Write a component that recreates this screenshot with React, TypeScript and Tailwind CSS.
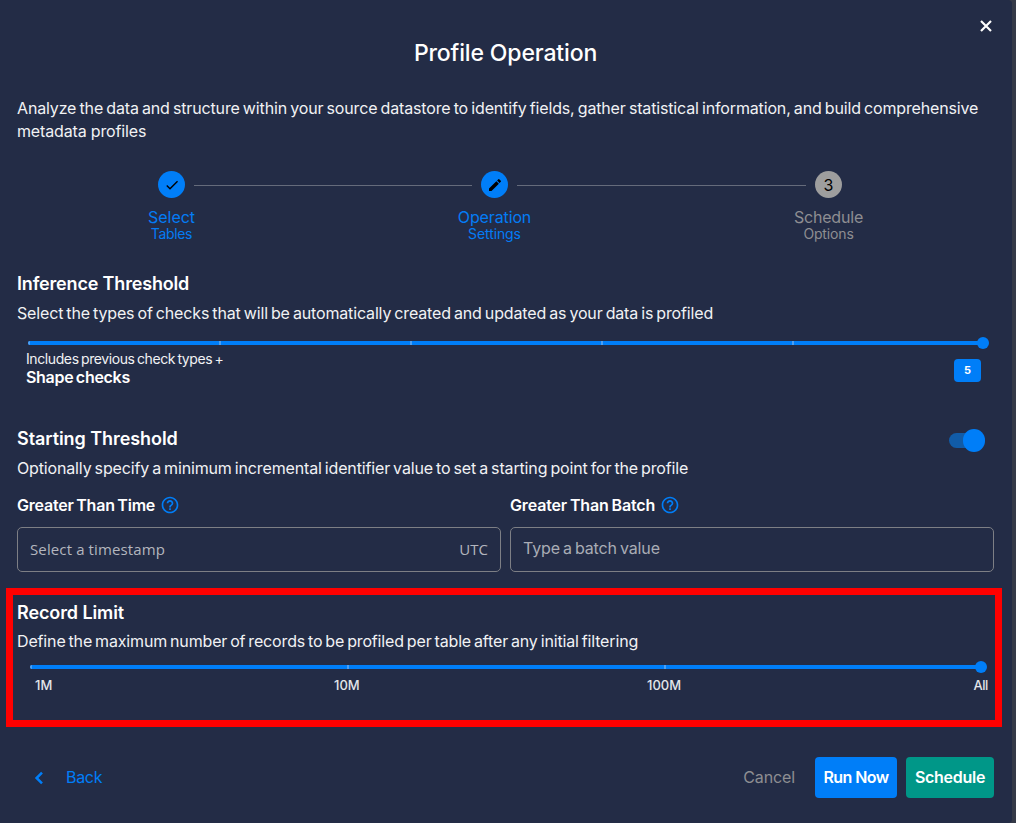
import { MdCheck, MdEdit, MdHelpOutline } from "react-icons/md";
import type { ReactNode } from "react";

function CloseIcon() {
  return (
    <svg viewBox="0 0 24 24" className="size-5 fill-none stroke-white stroke-[2.6]">
      <path d="M6 6 L18 18 M18 6 L6 18" />
    </svg>
  );
}

function BackIcon() {
  return (
    <svg viewBox="0 0 24 24" className="size-6 fill-none stroke-[#007ef8] stroke-[2.5]">
      <path d="M15 6.6 L9.6 12 L15 17.4" />
    </svg>
  );
}

function Step({ icon, title, subtitle, muted }: { icon: ReactNode; title: ReactNode; subtitle: ReactNode; muted?: boolean }) {
  return (
    <div className={`flex w-[27px] flex-col items-center whitespace-nowrap ${muted ? "text-[#8e8e92]" : "text-[#037cf5]"}`}>
      <div className={`flex size-[27px] items-center justify-center rounded-full text-black ${muted ? "bg-[#9e9e9e]" : "bg-[#007ef8]"}`}>
        {icon}
      </div>
      <div className="mt-[9px] text-base leading-5">{title}</div>
      <div className="-mt-px text-sm leading-4">{subtitle}</div>
    </div>
  );
}

function Slider({ segments }: { segments: number }) {
  return (
    <div className="flex h-3 items-center">
      <div className="flex h-1 flex-1 overflow-hidden rounded-l-sm bg-[#007ef8]">
        {Array.from({ length: segments }, (_, i) => (
          <div key={i} className="h-1 flex-1 border-l-2 border-[#4d9ff2]" />
        ))}
      </div>
      <div className="-ml-1.5 size-3 rounded-full bg-[#007ef8]" />
    </div>
  );
}

function Connector() {
  return <div className="mx-[9px] mt-3.5 h-px flex-1 bg-[#656b7b]" />;
}

export default function App() {
  return (
    <div className="flex h-[823px] w-[1016px] bg-[#353a48] font-['Inter',sans-serif] text-base text-[#f1f2f4]">
      <div className="flex w-[1012px] shrink-0 flex-col rounded-r-[4px] bg-[#232c46]">
        <div className="flex h-9 items-end justify-end pr-4">
          <CloseIcon />
        </div>
        <h1 className="mt-px pr-px text-center text-[23px] leading-8 font-medium tracking-[-0.15px] text-white">
          Profile Operation
        </h1>
        <div className="mt-7 pl-[17px] leading-[23px] tracking-[-0.15px] [word-spacing:-1.15px]">
          <p className="whitespace-nowrap">
            Analyze the data and structure within your source datastore to identify fields, gather statistical information, and build comprehensive
          </p>
          <p className="[word-spacing:0px]">metadata profiles</p>
        </div>

        <div className="mt-7 flex h-[101px] items-start pr-[170px] pl-[158px]">
          <Step icon={<MdCheck className="size-4" />} title="Select" subtitle={<span className="tracking-[-0.35px]">Tables</span>} />
          <div className="flex w-[296px]">
            <Connector />
          </div>
          <Step icon={<MdEdit className="size-4" />} title={<span className="tracking-[-0.13px]">Operation</span>} subtitle={<span className="tracking-[-0.1px]">Settings</span>} />
          <Connector />
          <Step muted icon="3" title={<span className="tracking-[-0.19px]">Schedule</span>} subtitle={<span className="tracking-[-0.15px]">Options</span>} />
        </div>

        <section className="h-[155px] pr-[18px] pl-[17px]">
          <h2 className="text-lg leading-6 font-semibold tracking-[-0.17px] text-white">Inference Threshold</h2>
          <p className="mt-[5px] whitespace-nowrap leading-6 tracking-[-0.15px] [word-spacing:-1.25px]">
            Select the types of checks that will be automatically created and updated as your data is profiled
          </p>
          <div className="mt-3 w-[972px] pl-[11px]">
            <Slider segments={5} />
          </div>
          <div className="flex justify-between pr-[13px] pl-[9px]">
            <div className="mt-px">
              <div className="text-sm leading-[18px] tracking-[-0.4px] [word-spacing:-1.2px]">Includes previous check types +</div>
              <div className="leading-[18px] font-semibold tracking-[-0.3px] text-white [word-spacing:-1.2px]">Shape checks</div>
            </div>
            <div className="mt-2.5 flex h-[23px] w-[27px] items-center justify-center rounded-[4px] bg-[#007ef8] text-[11px] font-bold text-white">5</div>
          </div>
        </section>

        <section className="h-[161px] pr-[18px] pl-[17px]">
          <div className="flex justify-between pr-[9px]">
            <h2 className="text-lg leading-6 font-semibold tracking-[-0.07px] text-white">Starting Threshold</h2>
            <div className="mt-px flex h-6 w-9 items-center">
              <div className="h-[15px] w-[30px] rounded-full bg-[#115ca8]" />
              <div className="-ml-4 h-[23px] w-[22px] shrink-0 rounded-full bg-[#007ef8]" />
            </div>
          </div>
          <p className="mt-[4px] whitespace-nowrap leading-6 tracking-[-0.15px] [word-spacing:-1.25px]">
            Optionally specify a minimum incremental identifier value to set a starting point for the profile
          </p>
          <div className="mt-[13px] flex gap-[9px]">
            <div className="w-[484px]">
              <div className="flex h-6 items-center gap-[5px] font-semibold tracking-[-0.2px] text-white [word-spacing:-1.3px]">
                Greater Than Time
                <MdHelpOutline className="size-5 text-[#007ef8]" />
              </div>
              <div className="mt-[10px] flex h-[45px] items-center justify-between rounded-[5px] border border-[#7d7f85] px-3 font-['Open_Sans','Noto_Sans',sans-serif] text-[15px] text-[#b3b6be]">
                <span className="tracking-[0.12px]">Select a timestamp</span>
                <span>UTC</span>
              </div>
            </div>
            <div className="w-[484px]">
              <div className="flex h-6 items-center gap-[5px] font-semibold tracking-[-0.15px] text-white [word-spacing:-1px]">
                Greater Than Batch
                <MdHelpOutline className="size-5 text-[#007ef8]" />
              </div>
              <div className="mt-[10px] flex h-[45px] items-center rounded-[5px] border border-[#7d7f85] px-3 pb-[3px] tracking-[-0.15px] text-[#a9acb5] [word-spacing:-1.2px]">
                Type a batch value
              </div>
            </div>
          </div>
        </section>

        <section className="ml-1.5 h-[139px] w-[996px] border-7 border-[#ff0000] pl-1">
          <h2 className="mt-1.5 text-lg leading-6 font-semibold tracking-[-0.1px] text-white">Record Limit</h2>
          <p className="mt-1 whitespace-nowrap leading-6 tracking-[-0.15px] [word-spacing:-1.4px]">
            Define the maximum number of records to be profiled per table after any initial filtering
          </p>
          <div className="ml-[13px] w-[957px] pt-2">
            <Slider segments={3} />
          </div>
          <div className="mt-[3px] ml-[18px] flex w-[953px] text-[13px] leading-[18px] font-medium text-[#e4e6ea]">
            <span className="w-[299px]">1M</span>
            <span className="w-[313px]">10M</span>
            <span className="flex-1">100M</span>
            <span className="tracking-[-0.4px]">All</span>
          </div>
        </section>

        <footer className="mt-[30px] flex h-[41px] items-center pr-[18px] pl-[27px]">
          <BackIcon />
          <span className="ml-[15px] pb-px tracking-[-0.3px] text-[#007ef8]">Back</span>
          <span className="mr-5 ml-auto pb-px tracking-[-0.12px] text-[#8e8e92]">Cancel</span>
          <button className="h-[41px] w-[82px] rounded-[4px] bg-[#007ef8] pb-px font-semibold tracking-[-0.6px] text-white">Run Now</button>
          <button className="ml-[9px] h-[41px] w-[88px] rounded-[4px] bg-[#009788] pb-px font-semibold tracking-[-0.28px] text-white">Schedule</button>
        </footer>
      </div>
    </div>
  );
}
